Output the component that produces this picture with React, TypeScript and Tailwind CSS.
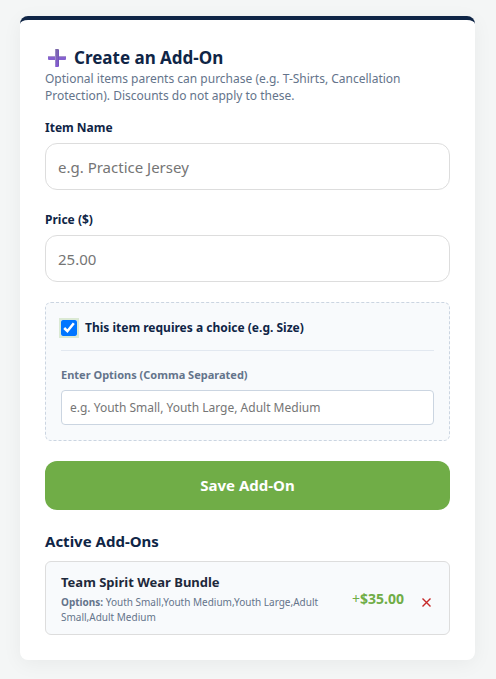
import { useState } from 'react';
import type { InputHTMLAttributes } from 'react';

interface AddOn {
  name: string;
  options: string[];
  price: number;
}

const initialAddOns: AddOn[] = [
  {
    name: 'Team Spirit Wear Bundle',
    options: ['Youth Small', 'Youth Medium', 'Youth Large', 'Adult Small', 'Adult Medium'],
    price: 35,
  },
];

function PlusIcon() {
  return (
    <svg width="18" height="18" viewBox="0 0 18 18" aria-hidden="true" className="shrink-0">
      <defs>
        <linearGradient id="plus-fill" x1="0" y1="0" x2="0" y2="1">
          <stop offset="0" stopColor="#7a68a8" />
          <stop offset="1" stopColor="#8558d6" />
        </linearGradient>
      </defs>
      <rect x="0" y="7" width="18" height="4" rx="1" fill="#8561cf" />
      <rect x="0" y="7" width="18" height="1" rx="0.5" fill="#a795ca" />
      <rect x="7" y="0" width="4" height="18" rx="1" fill="url(#plus-fill)" />
      <rect x="7" y="1" width="1" height="16" fill="#9a8bc6" />
      <rect x="10" y="1" width="1" height="16" fill="#7157b8" />
    </svg>
  );
}

interface FieldProps extends InputHTMLAttributes<HTMLInputElement> {
  id: string;
  label: string;
}

function Field({ id, label, ...props }: FieldProps) {
  return (
    <div className="mb-5">
      <label htmlFor={id} className="mb-[5px] block text-xs leading-5 font-bold text-[#0f2546]">
        {label}
      </label>
      <input
        id={id}
        className="block h-[47px] w-full rounded-xl border border-[#dddddd] bg-white px-3 text-[15px] text-[#0f2546] placeholder:text-[#757575]"
        {...props}
      />
    </div>
  );
}

export default function App() {
  const [addOns, setAddOns] = useState(initialAddOns);
  const [name, setName] = useState('');
  const [price, setPrice] = useState('');
  const [hasChoice, setHasChoice] = useState(true);
  const [options, setOptions] = useState('');

  const handleSave = () => {
    if (!name || !price) return;
    setAddOns([
      ...addOns,
      { name, price: Number(price), options: hasChoice && options ? options.split(',') : [] },
    ]);
    setName('');
    setPrice('');
    setOptions('');
  };

  return (
    <main className="min-h-screen bg-[#f4f6f6] pt-4 pr-[21px] pb-[19px] pl-5 font-['Noto_Sans','Open_Sans',sans-serif] text-[#0f2546]">
      <section className="rounded-lg border-t-4 border-[#0f2546] bg-white p-[25px] shadow-[0_4px_20px_rgba(0,0,0,0.05)]">
        <h1 className="flex items-center gap-2 pl-[3px] text-[17px] leading-[25px] font-bold">
          <PlusIcon />
          Create an Add-On
        </h1>
        <p className="mb-[14px] text-xs leading-[17px] text-[#64748b]">
          Optional items parents can purchase (e.g. T-Shirts, Cancellation Protection). Discounts do not
          apply to these.
        </p>

        <Field
          id="item-name"
          label="Item Name"
          placeholder="e.g. Practice Jersey"
          value={name}
          onChange={(e) => setName(e.target.value)}
        />
        <Field
          id="price"
          label="Price ($)"
          placeholder="25.00"
          inputMode="decimal"
          value={price}
          onChange={(e) => setPrice(e.target.value)}
        />

        <div className="mb-5 rounded-md border border-dashed border-[#cbd5e1] bg-[#f8fafc] p-[15px]">
          <div className="flex items-center gap-2">
            <input
              id="has-choice"
              type="checkbox"
              checked={hasChoice}
              onChange={(e) => setHasChoice(e.target.checked)}
              className="size-4 ring-2 ring-[#dbe9d4]"
            />
            <label htmlFor="has-choice" className="text-xs leading-5 font-bold">
              This item requires a choice (e.g. Size)
            </label>
          </div>
          {hasChoice && (
            <div className="mt-3 border-t border-[#e2e8f0] pt-4">
              <label htmlFor="options" className="mb-[7px] block text-[11px] leading-4 font-bold text-[#64748b]">
                Enter Options (Comma Separated)
              </label>
              <input
                id="options"
                placeholder="e.g. Youth Small, Youth Large, Adult Medium"
                value={options}
                onChange={(e) => setOptions(e.target.value)}
                className="block h-[35px] w-full rounded border border-[#cbd5e1] bg-white px-2 text-xs placeholder:text-[#757575]"
              />
            </div>
          )}
        </div>

        <button
          type="button"
          onClick={handleSave}
          className="h-[49px] w-full rounded-xl bg-[#70ad47] text-[15px] font-bold text-white"
        >
          Save Add-On
        </button>

        <h2 className="mt-5 mb-2 text-[15px] leading-[23px] font-bold">Active Add-Ons</h2>
        <ul className="flex flex-col gap-2">
          {addOns.map((addOn, index) => (
            <li
              key={index}
              className="flex items-center justify-between gap-4 rounded-md border border-[#dddddd] bg-[#f8fafc] px-[15px] pt-3 pb-[9px]"
            >
              <div>
                <h3 className="mb-[5px] text-[13px] leading-4 font-bold text-[#1e293b]">{addOn.name}</h3>
                {addOn.options.length > 0 && (
                  <p className="text-[10px] leading-[15px] text-[#64748b]">
                    <strong>Options:</strong> {addOn.options.join(',')}
                  </p>
                )}
              </div>
              <div className="-mr-0.5 flex shrink-0 items-center gap-3 pb-0.5">
                <span className="text-sm text-[#70ad47]">
                  +<strong>${addOn.price.toFixed(2)}</strong>
                </span>
                <button
                  type="button"
                  aria-label={`Remove ${addOn.name}`}
                  onClick={() => setAddOns(addOns.filter((_, i) => i !== index))}
                  className="flex size-5 items-end justify-center pb-0.5 text-[#c62828]"
                >
                  <svg width="9" height="9" viewBox="0 0 9 9" stroke="currentColor" strokeWidth="1.4">
                    <path d="M0.5 0.5l8 8M8.5 0.5l-8 8" />
                  </svg>
                </button>
              </div>
            </li>
          ))}
        </ul>
      </section>
    </main>
  );
}
